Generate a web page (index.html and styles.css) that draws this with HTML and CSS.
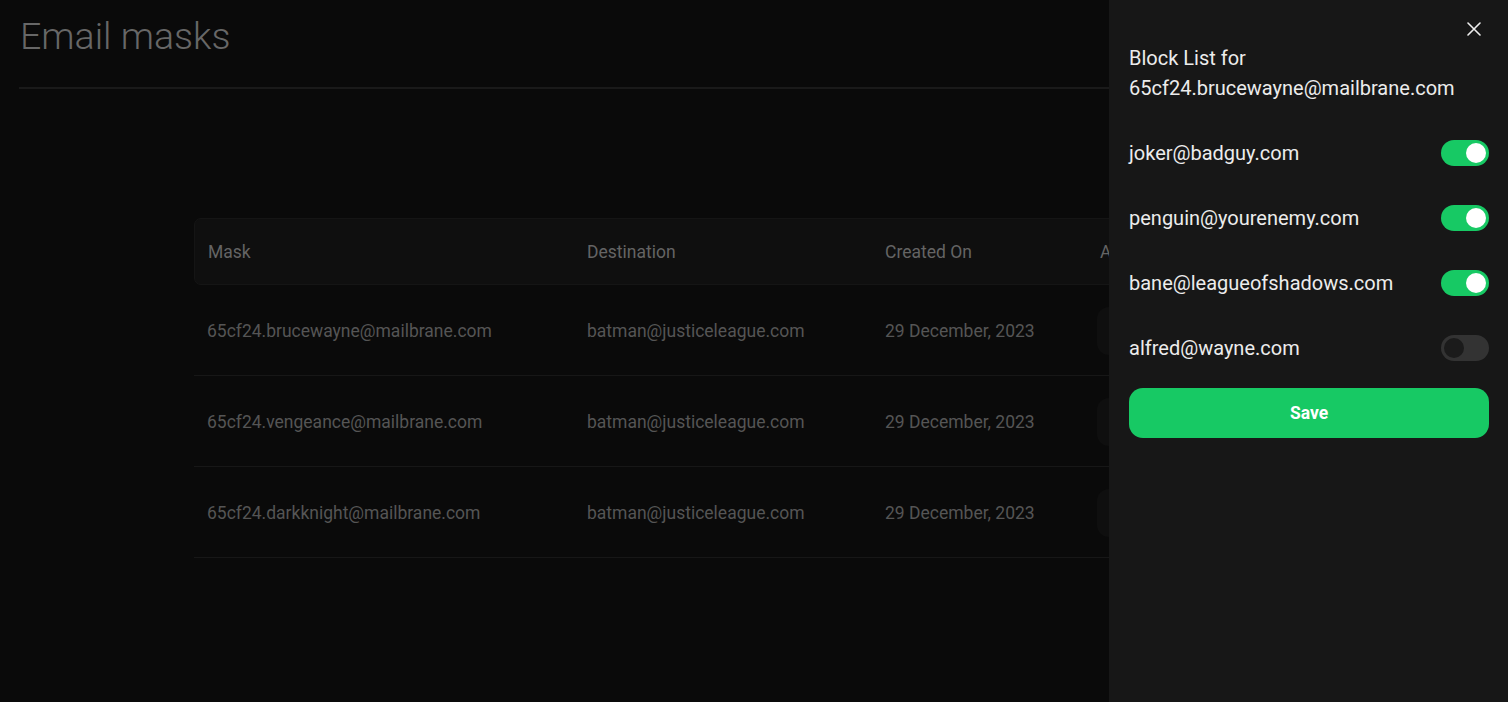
FILE: index.html
```html
<!DOCTYPE html>
<html lang="en">
<head>
<meta charset="utf-8">
<title>Email masks</title>
<link rel="stylesheet" href="styles.css">
</head>
<body>
<main class="page">
  <header class="page-header">
    <h1 class="page-title">Email masks</h1>
  </header>
  <section class="table-wrap">
    <div class="table">
      <div class="thead">
        <div class="cell">Mask</div>
        <div class="cell">Destination</div>
        <div class="cell">Created On</div>
        <div class="cell">Actions</div>
      </div>
      <div class="row">
        <div class="cell">65cf24.brucewayne@mailbrane.com</div>
        <div class="cell">batman@justiceleague.com</div>
        <div class="cell">29 December, 2023</div>
        <div class="cell"><span class="action-btn"></span></div>
      </div>
      <div class="row">
        <div class="cell">65cf24.vengeance@mailbrane.com</div>
        <div class="cell">batman@justiceleague.com</div>
        <div class="cell">29 December, 2023</div>
        <div class="cell"><span class="action-btn"></span></div>
      </div>
      <div class="row">
        <div class="cell">65cf24.darkknight@mailbrane.com</div>
        <div class="cell">batman@justiceleague.com</div>
        <div class="cell">29 December, 2023</div>
        <div class="cell"><span class="action-btn"></span></div>
      </div>
    </div>
  </section>
</main>

<aside class="drawer">
  <button class="close-btn" aria-label="Close">
    <svg width="14" height="14" viewBox="0 0 14 14" fill="none" stroke="#ededed" stroke-width="1.6" stroke-linecap="round"><path d="M1 1L13 13M13 1L1 13"/></svg>
  </button>
  <h2 class="drawer-title">Block List for<br>65cf24.brucewayne@mailbrane.com</h2>
  <ul class="block-list">
    <li class="block-item"><span>joker@badguy.com</span><span class="switch on"><span class="knob"></span></span></li>
    <li class="block-item"><span>penguin@yourenemy.com</span><span class="switch on"><span class="knob"></span></span></li>
    <li class="block-item"><span>bane@leagueofshadows.com</span><span class="switch on"><span class="knob"></span></span></li>
    <li class="block-item"><span>alfred@wayne.com</span><span class="switch"><span class="knob"></span></span></li>
  </ul>
  <button class="save-btn">Save</button>
</aside>
</body>
</html>
```

FILE: styles.css
```css
* { box-sizing: border-box; }
html, body { margin: 0; height: 100%; }
body {
  background: #0a0a0a;
  font-family: Roboto, "Noto Sans", Arial, sans-serif;
  overflow: hidden;
}
.page {
  padding: 0 0 0 19px;
}
.page-header {
  border-bottom: 2px solid #1a1a1a;
  height: 89px;
  padding-top: 14px;
}
.page-title {
  margin: 0 0 0 1px;
  font-size: 37.5px;
  font-weight: 300;
  color: #676767;
  line-height: 44px;
}
.table-wrap {
  margin-left: -19px;
  padding-top: 129px;
}
.table {
  width: 1120px;
  margin: 0 auto;
}
.thead, .row {
  display: grid;
  grid-template-columns: 379px 298px 215px 1fr;
  align-items: center;
}
.thead {
  height: 67px;
  padding-top: 1px;
  background: #0f0f0f;
  border: 1px solid #151515;
  border-radius: 7px;
  color: #646464;
  font-size: 17.5px;
}
.thead .cell { padding-left: 13px; }
.row {
  height: 91px;
  padding-top: 2px;
  border-bottom: 1px solid #171717;
  color: #555555;
  font-size: 17.5px;
}
.row .cell { padding-left: 13px; }
.row .cell:nth-child(2), .row .cell:nth-child(3) { padding-left: 14px; }
.action-btn {
  display: block;
  width: 120px;
  height: 48px;
  margin-left: -2px;
  background: #0f0f0f;
  border-radius: 12px;
}
.drawer {
  position: fixed;
  top: 0;
  right: 0;
  width: 399px;
  height: 100%;
  background: #171717;
  padding: 43px 19px 0 20px;
  color: #ececec;
}
.close-btn {
  position: absolute;
  top: 22px;
  right: 27px;
  width: 14px;
  height: 14px;
  padding: 0;
  border: 0;
  background: none;
  display: flex;
}
.drawer-title {
  margin: 0;
  font-size: 20px;
  font-weight: 400;
  line-height: 30px;
}
.block-list {
  list-style: none;
  margin: 17px 0 0;
  padding: 0;
}
.block-item {
  display: flex;
  align-items: center;
  justify-content: space-between;
  height: 65px;
  font-size: 20px;
}
.switch {
  width: 48px;
  height: 26px;
  border-radius: 13px;
  background: #333333;
  padding: 3px;
  display: flex;
}
.switch .knob {
  width: 20px;
  height: 20px;
  border-radius: 50%;
  background: #1b1b1b;
}
.switch.on { background: #17c964; justify-content: flex-end; }
.switch.on .knob { background: #ffffff; }
.save-btn {
  display: block;
  width: 100%;
  height: 50px;
  margin-top: 8px;
  border: 0;
  border-radius: 14px;
  background: #17c964;
  color: #ffffff;
  font-family: Roboto, "Noto Sans", Arial, sans-serif;
  font-size: 17.5px;
  font-weight: 700;
}
```
